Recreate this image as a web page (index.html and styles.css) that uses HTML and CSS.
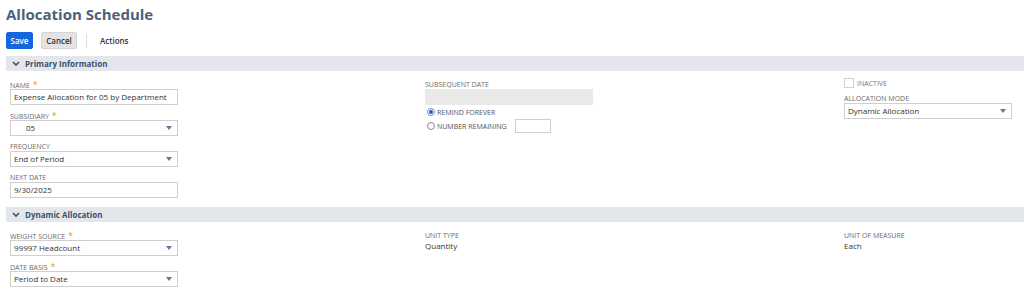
FILE: index.html
```html
<!DOCTYPE html>
<html>
<head>
<meta charset="utf-8">
<link rel="stylesheet" href="styles.css">
</head>
<body>
<div class="page">
  <h1 class="title">Allocation Schedule</h1>
  <div class="toolbar">
    <button class="btn btn-primary">Save</button>
    <button class="btn btn-secondary">Cancel</button>
    <span class="sep"></span>
    <span class="actions">Actions</span>
  </div>

  <div class="section-head"><svg class="chev" viewBox="0 0 8 5" width="8" height="5"><path d="M1 1 L4 4 L7 1" fill="none" stroke="#3d4f68" stroke-width="1.6"/></svg><span>Primary Information</span></div>
  <div class="section-body">
    <div class="col">
      <div class="field">
        <div class="label">NAME <span class="req">*</span></div>
        <div class="input">Expense Allocation for 05 by Department</div>
      </div>
      <div class="field">
        <div class="label">SUBSIDIARY <span class="req">*</span></div>
        <div class="input select"><span class="indent">05</span><span class="arrow"></span></div>
      </div>
      <div class="field">
        <div class="label">FREQUENCY</div>
        <div class="input select"><span>End of Period</span><span class="arrow"></span></div>
      </div>
      <div class="field">
        <div class="label">NEXT DATE</div>
        <div class="input">9/30/2025</div>
      </div>
    </div>
    <div class="col">
      <div class="field">
        <div class="label">SUBSEQUENT DATE</div>
        <div class="input disabled"></div>
      </div>
      <div class="radios">
        <div class="radio-row"><span class="radio on"></span><span class="rlabel">REMIND FOREVER</span></div>
        <div class="radio-row"><span class="radio"></span><span class="rlabel">NUMBER REMAINING</span><span class="small-input"></span></div>
      </div>
    </div>
    <div class="col">
      <div class="check-row"><span class="checkbox"></span><span class="clabel">INACTIVE</span></div>
      <div class="field tight">
        <div class="label">ALLOCATION MODE</div>
        <div class="input select"><span>Dynamic Allocation</span><span class="arrow"></span></div>
      </div>
    </div>
  </div>

  <div class="section-head second"><svg class="chev" viewBox="0 0 8 5" width="8" height="5"><path d="M1 1 L4 4 L7 1" fill="none" stroke="#3d4f68" stroke-width="1.6"/></svg><span>Dynamic Allocation</span></div>
  <div class="section-body">
    <div class="col">
      <div class="field">
        <div class="label">WEIGHT SOURCE <span class="req">*</span></div>
        <div class="input select"><span>99997 Headcount</span><span class="arrow"></span></div>
      </div>
      <div class="field">
        <div class="label">DATE BASIS <span class="req">*</span></div>
        <div class="input select"><span>Period to Date</span><span class="arrow"></span></div>
      </div>
    </div>
    <div class="col">
      <div class="field">
        <div class="label">UNIT TYPE</div>
        <div class="value">Quantity</div>
      </div>
    </div>
    <div class="col">
      <div class="field">
        <div class="label">UNIT OF MEASURE</div>
        <div class="value">Each</div>
      </div>
    </div>
  </div>
</div>
</body>
</html>
```
FILE: styles.css
```css
html, body {
  margin: 0;
  padding: 0;
  background: #fff;
}
body {
  font-family: "Open Sans", "Liberation Sans", sans-serif;
  color: #333;
}
.page {
  padding: 0 0 0 6px;
}
.title {
  margin: 0;
  padding-top: 4px;
  font-size: 15px;
  line-height: 20px;
  font-weight: 700;
  color: #4d5f79;
}
.toolbar {
  display: flex;
  align-items: center;
  margin-top: 8px;
  height: 17px;
}
.btn {
  font-family: inherit;
  font-size: 8px;
  font-weight: 600;
  height: 17px;
  padding: 0;
  border-radius: 2px;
  line-height: 15px;
}
.btn-primary {
  width: 27px;
  background: #1467dc;
  border: 1px solid #1467dc;
  color: #fff;
}
.btn-secondary {
  width: 36px;
  margin-left: 8px;
  background: #e4e4e4;
  border: 1px solid #d4d4d4;
  color: #333;
}
.sep {
  width: 1px;
  height: 14px;
  background: #ddd;
  margin-left: 9px;
}
.actions {
  margin-left: 13px;
  font-size: 8px;
  font-weight: 600;
  color: #333;
}
.section-head {
  margin-top: 7px;
  height: 15px;
  background: #e3e7ec;
  display: flex;
  align-items: center;
  font-size: 8px;
  font-weight: 700;
  color: #3d4f68;
}
.section-head.second {
  margin-top: 9px;
  height: 15px;
}
.chev {
  margin-left: 6px;
  margin-right: 5px;
}
.section-body {
  display: grid;
  grid-template-columns: 415px 419px 1fr;
  padding-left: 4px;
  padding-top: 3px;
}
.col {
  display: flex;
  flex-direction: column;
}
.field {
  padding-top: 6px;
}
.label {
  font-size: 7px;
  line-height: 9px;
  height: 9px;
  color: #6b6b6b;
  white-space: nowrap;
}
.req {
  color: #e0a800;
  font-size: 9px;
  margin-left: 1px;
}
.input {
  box-sizing: border-box;
  width: 168px;
  height: 16px;
  border: 1px solid #cfcfcf;
  font-size: 8px;
  line-height: 14px;
  padding: 0 3px;
  color: #333;
  display: flex;
  justify-content: space-between;
  align-items: center;
  white-space: nowrap;
}
.indent {
  padding-left: 12px;
}
.arrow {
  width: 0;
  height: 0;
  border-left: 3.5px solid transparent;
  border-right: 3.5px solid transparent;
  border-top: 4px solid #62799c;
  margin-right: 2px;
}
.input.disabled {
  background: #e9e9e9;
  border-color: #e9e9e9;
}
.radios {
  margin-top: 0;
  display: flex;
  flex-direction: column;
}
.radio-row {
  display: flex;
  align-items: center;
  height: 14px;
}
.radio {
  box-sizing: border-box;
  width: 8px;
  height: 8px;
  border-radius: 50%;
  border: 1px solid #8a8a8a;
  margin-left: 2px;
  margin-right: 2px;
  background: #fff;
  position: relative;
}
.radio.on {
  border-color: #6e8fc8;
}
.radio.on::after {
  content: "";
  position: absolute;
  left: 1px;
  top: 1px;
  width: 4px;
  height: 4px;
  border-radius: 50%;
  background: #1d5bc4;
}
.rlabel {
  font-size: 7px;
  color: #555;
}
.small-input {
  box-sizing: border-box;
  width: 36px;
  height: 14px;
  border: 1px solid #cfcfcf;
  margin-left: 8px;
}
.check-row {
  display: flex;
  align-items: center;
  margin-top: 4px;
  height: 10px;
}
.checkbox {
  box-sizing: border-box;
  width: 10px;
  height: 10px;
  border: 1px solid #d0d0d0;
  background: #fff;
}
.clabel {
  font-size: 7px;
  color: #777;
  margin-left: 3px;
}
.field.tight {
  padding-top: 6px;
}
.value {
  font-size: 8px;
  line-height: 12px;
  color: #333;
}
```
